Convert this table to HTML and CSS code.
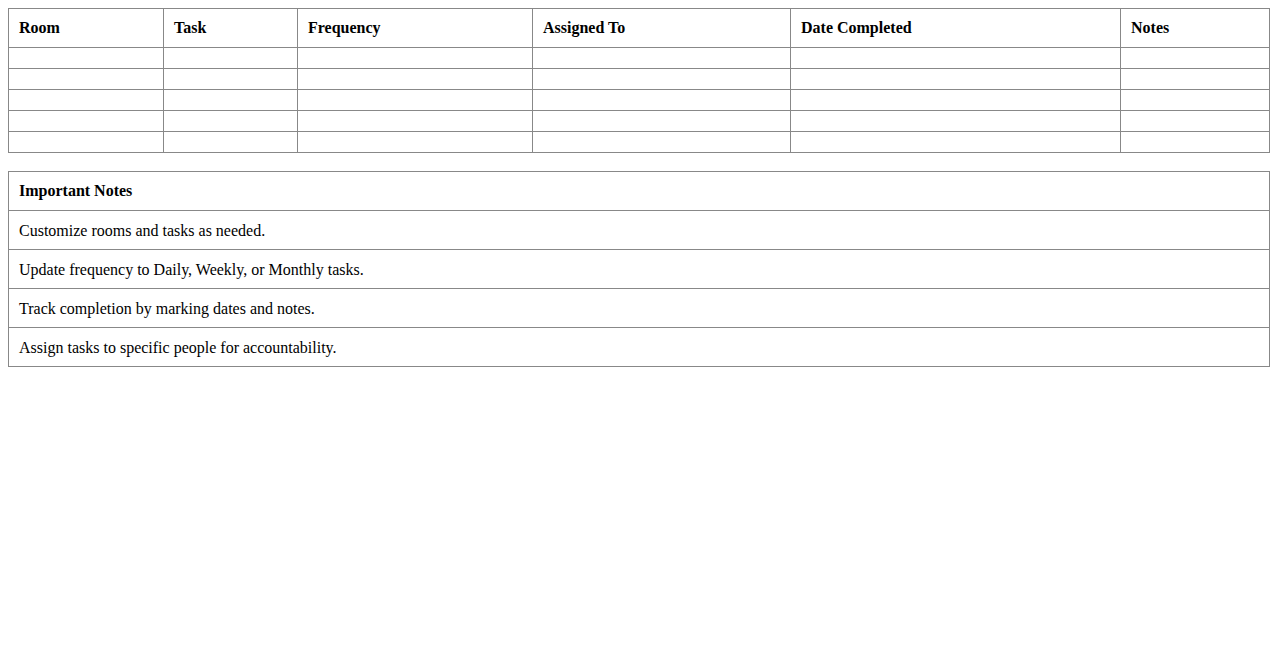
FILE: index.html
```html
<!DOCTYPE html>
<html>
<head>
<meta charset="utf-8">
<link rel="stylesheet" href="styles.css">
</head>
<body>
<table class="grid tasks">
  <colgroup>
    <col class="c-room"><col class="c-task"><col class="c-freq"><col class="c-assigned"><col class="c-date"><col>
  </colgroup>
  <thead>
    <tr><th>Room</th><th>Task</th><th>Frequency</th><th>Assigned To</th><th>Date Completed</th><th>Notes</th></tr>
  </thead>
  <tbody>
    <tr><td></td><td></td><td></td><td></td><td></td><td></td></tr>
    <tr><td></td><td></td><td></td><td></td><td></td><td></td></tr>
    <tr><td></td><td></td><td></td><td></td><td></td><td></td></tr>
    <tr><td></td><td></td><td></td><td></td><td></td><td></td></tr>
    <tr><td></td><td></td><td></td><td></td><td></td><td></td></tr>
  </tbody>
</table>
<table class="grid notes">
  <thead><tr><th>Important Notes</th></tr></thead>
  <tbody>
    <tr><td>Customize rooms and tasks as needed.</td></tr>
    <tr><td>Update frequency to Daily, Weekly, or Monthly tasks.</td></tr>
    <tr><td>Track completion by marking dates and notes.</td></tr>
    <tr><td>Assign tasks to specific people for accountability.</td></tr>
  </tbody>
</table>
</body>
</html>
```
FILE: styles.css
```css
body {
  margin: 8px;
  font-family: "Liberation Serif", "Times New Roman", serif;
  font-size: 16px;
  color: #000;
  background: #fff;
}
.grid {
  width: 1262px;
  border-collapse: collapse;
  table-layout: fixed;
}
.grid th, .grid td {
  border: 1px solid #888;
  padding: 10px;
  text-align: left;
  line-height: 18px;
}
.grid th { font-weight: bold; }
.c-room { width: 155px; }
.c-task { width: 134px; }
.c-freq { width: 235px; }
.c-assigned { width: 258px; }
.c-date { width: 330px; }
.tasks td { height: 0; padding: 10px; line-height: 0; }
.notes { margin-top: 18px; }
.notes td { padding-top: 11px; padding-bottom: 9px; }
```
